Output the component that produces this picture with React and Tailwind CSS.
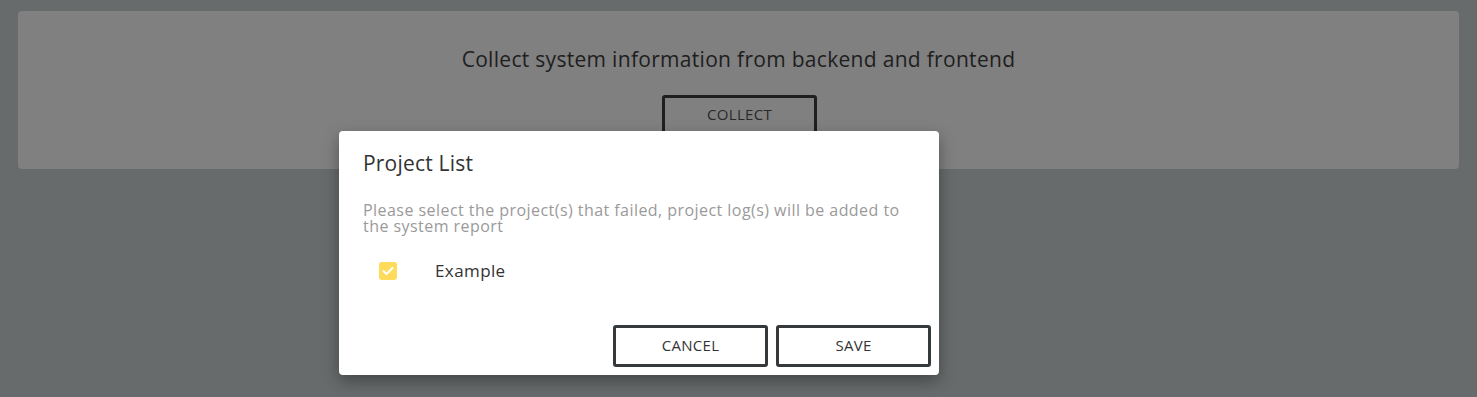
export default function App() {
  return (
    <div className="relative h-[397px] w-full overflow-hidden bg-[#686b6b] px-[18px] pt-[11px]" style={{ fontFamily: '"Open Sans", "Liberation Sans", sans-serif' }}>
      <div className="flex h-[158px] flex-col items-center rounded-[4px] bg-[#808080] pt-[34px]">
        <div className="text-[21px] leading-[28px] tracking-[0.3px] text-[#1e1e1e]">Collect system information from backend and frontend</div>
        <button className="ml-[2px] mt-[22px] flex h-[44px] w-[155px] items-start justify-center rounded-[3px] border-[3px] border-[#1f1f1f] pt-[7px] text-[15px] leading-[18px] tracking-[0.3px] text-[#2a2a2a]">COLLECT</button>
      </div>
      <div className="absolute left-[339px] top-[131px] flex h-[244px] w-[600px] flex-col rounded-[4px] bg-white shadow-[0_6px_16px_rgba(0,0,0,0.35)]">
        <div className="px-[24px] pt-[18px] text-[21px] leading-[28px] tracking-[0.2px] text-[#333]">Project List</div>
        <div className="mt-[25px] px-[24px] text-[16px] leading-[16px] tracking-[0.45px] text-[#9a9a9a]">
          <div>Please select the project(s) that failed, project log(s) will be added to</div>
          <div>the system report</div>
        </div>
        <div className="mt-[27px] flex items-center pl-[40px]">
          <div className="flex h-[18px] w-[18px] items-center justify-center rounded-[3px] bg-[#ffdb5c]">
            <svg width="12" height="10" viewBox="0 0 12 10" fill="none">
              <path d="M1.5 5.2L4.5 8L10.5 2" stroke="white" strokeWidth="2" strokeLinecap="round" strokeLinejoin="round" />
            </svg>
          </div>
          <span className="ml-[38px] text-[17px] leading-[20px] tracking-[0.4px] text-[#333]">Example</span>
        </div>
        <div className="mt-auto flex justify-end gap-[8px] pb-[8px] pr-[8px]">
          <button className="flex h-[42px] w-[155px] items-center justify-center rounded-[3px] border-[3px] border-[#35393c] pb-[1px] text-[15px] tracking-[0.3px] text-[#333]">CANCEL</button>
          <button className="flex h-[42px] w-[155px] items-center justify-center rounded-[3px] border-[3px] border-[#35393c] pb-[1px] text-[15px] tracking-[0.3px] text-[#333]">SAVE</button>
        </div>
      </div>
    </div>
  );
}
